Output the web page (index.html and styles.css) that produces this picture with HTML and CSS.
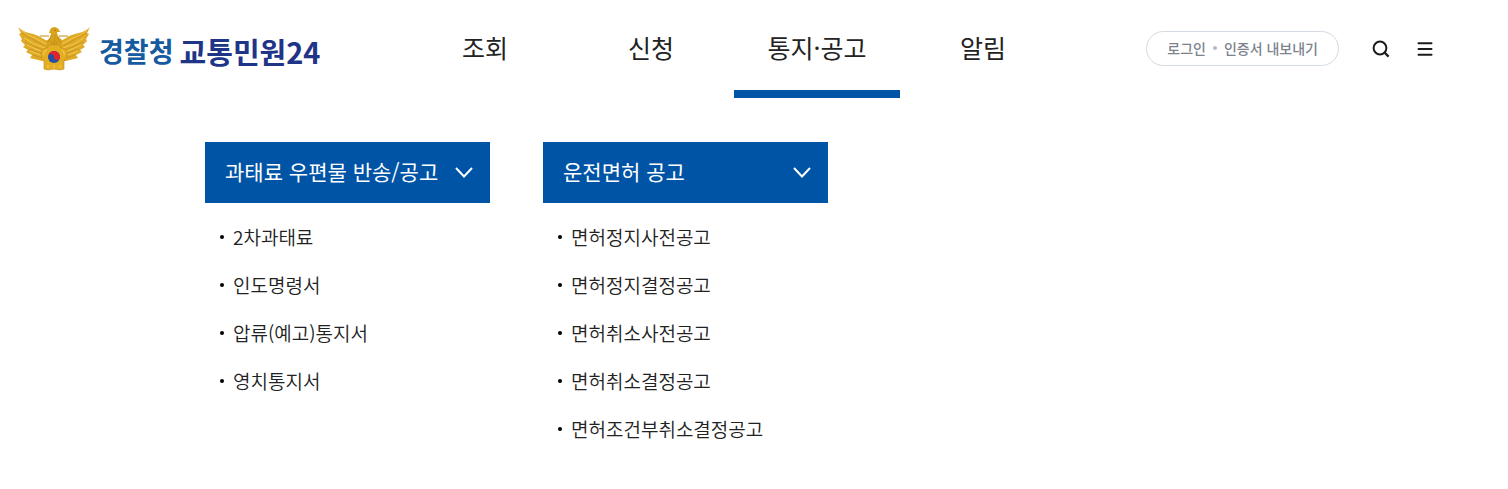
FILE: index.html
```
<!DOCTYPE html>
<html lang="ko">

<head>
    <meta charset="UTF-8">
    <meta name="viewport" content="width=device-width, initial-scale=1.0">
    <title>경찰청 교통민원24</title>
    <link rel="stylesheet" href="styles.css">
</head>

<body>
    <header class="header">
        <a href="#" class="logo">
            <svg class="logo-mark" viewBox="0 0 72 44" aria-hidden="true">
                <!-- wings -->
                <path fill="#dfaa28" d="M0 0 Q4 4 11 6 Q20 8 24 11 L31 15 L31 35 L24 34 L16 32 L12 31 L14 28 L8 25 L10 23 L5 20 L7 18 L3 14 L4 12 L1 7 L3 6 Z" />
                <path fill="#dfaa28" d="M72 0 Q68 4 61 6 Q52 8 48 11 L41 15 L41 35 L48 34 L56 32 L60 31 L58 28 L64 25 L62 23 L67 20 L65 18 L69 14 L68 12 L71 7 L69 6 Z" />
                <path fill="none" stroke="#f3cb4c" stroke-width="1" d="M3 3 Q9 9 17 11 L28 17 M6 11 L16 17 L27 21 M9 18 L18 22 L26 25 M12 24 L23 28 M69 3 Q63 9 55 11 L44 17 M66 11 L56 17 L45 21 M63 18 L54 22 L46 25 M60 24 L49 28" />
                <path fill="none" stroke="#bd8a1b" stroke-width="0.6" d="M4 6 L16 13 L27 19 M7 15 L17 20 L26 23 M11 22 L24 27 M15 28 L24 31 M68 6 L56 13 L45 19 M65 15 L55 20 L46 23 M61 22 L48 27 M57 28 L48 31" />
                <path fill="none" stroke="#c28b18" stroke-width="1" d="M22 9 H31 M41 9 H50" />
                <!-- head and body -->
                <path fill="#d9a31d" d="M31 6 L32 3 Q33 0 37 0 Q41 1 42 5 L39 5 Q39 9 44 13 L44 24 L28 24 L28 14 Q33 11 33 6 Z" />
                <path fill="none" stroke="#b17f16" stroke-width="0.6" d="M34 8 L30 15 M37 8 L36 18 M39 10 L42 16 M33 14 L35 18 M38 14 L39 19" />
                <circle cx="37" cy="3" r="0.6" fill="#714a08" />
                <!-- flower -->
                <path fill="#e4ae23" stroke="#c18a17" stroke-width="0.6" d="M36 18 Q40 16 43 21 Q50 21 49 28 Q49 31 46 34 L46 42 L42 43 L36 42 L30 43 L26 42 L26 34 Q23 31 23 28 Q22 21 29 21 Q32 16 36 18 Z" />
                <path fill="none" stroke="#f8d565" stroke-width="0.8" d="M29 23 Q25 24 26 28 M43 23 Q47 24 46 28 M30 38 V41 M42 38 V41 M36 38 V41" />
                <circle cx="36" cy="30" r="6" fill="#2350a4" />
                <path fill="#e3222c" d="M30 30 A6 6 0 0 1 42 30 A3 3 0 0 1 36 30 A3 3 0 0 0 30 30 Z" />
            </svg>
            <span class="logo-text"><span class="logo-org">경찰청</span><span class="logo-name">교통민원24</span></span>
        </a>

        <nav class="gnb">
            <a href="#">조회</a>
            <a href="#">신청</a>
            <a href="#" class="active">통지·공고</a>
            <a href="#">알림</a>
        </nav>

        <div class="util">
            <div class="util-links">
                <a href="#">로그인</a>
                <span class="dot"></span>
                <a href="#">인증서 내보내기</a>
            </div>
            <button type="button" class="icon-button" aria-label="검색">
                <svg viewBox="0 0 18 18" fill="none" stroke="#1c1c1c" stroke-width="2">
                    <circle cx="8" cy="8" r="6.4" />
                    <path d="M12.3 12.3 L16.6 16.6" stroke-width="2.3" />
                </svg>
            </button>
            <button type="button" class="icon-button" aria-label="전체메뉴">
                <svg viewBox="0 0 18 18" fill="none" stroke="#1c1c1c" stroke-width="2" stroke-linecap="round">
                    <path d="M2.5 3.3 H15.5 M2.5 9 H15.5 M2.5 14.7 H15.5" />
                </svg>
            </button>
        </div>
    </header>

    <main class="submenu">
        <section class="menu-group">
            <button type="button" class="menu-title" aria-expanded="true">
                과태료 우편물 반송/공고
                <svg viewBox="0 0 18 12" fill="none" stroke="#fff" stroke-width="2">
                    <path d="M1 1 L9 9.5 L17 1" />
                </svg>
            </button>
            <ul>
                <li><a href="#">2차과태료</a></li>
                <li><a href="#">인도명령서</a></li>
                <li><a href="#">압류(예고)통지서</a></li>
                <li><a href="#">영치통지서</a></li>
            </ul>
        </section>

        <section class="menu-group">
            <button type="button" class="menu-title" aria-expanded="true">
                운전면허 공고
                <svg viewBox="0 0 18 12" fill="none" stroke="#fff" stroke-width="2">
                    <path d="M1 1 L9 9.5 L17 1" />
                </svg>
            </button>
            <ul>
                <li><a href="#">면허정지사전공고</a></li>
                <li><a href="#">면허정지결정공고</a></li>
                <li><a href="#">면허취소사전공고</a></li>
                <li><a href="#">면허취소결정공고</a></li>
                <li><a href="#">면허조건부취소결정공고</a></li>
            </ul>
        </section>
    </main>
</body>

</html>
```
FILE: styles.css
```
* {
    box-sizing: border-box;
}

body {
    margin: 0;
    background-color: #fff;
    color: #222;
    font-family: "Noto Sans CJK KR", "Noto Sans", sans-serif;
}

a {
    color: inherit;
    text-decoration: none;
}

button {
    border: none;
    font-family: inherit;
    cursor: pointer;
}

.header {
    display: flex;
    height: 98px;
    padding: 0 74px 0 18px;
}

.logo {
    display: flex;
    align-items: center;
    flex: 0 0 384px;
    gap: 9px;
}

.logo-mark {
    width: 72px;
    height: 44px;
}

.logo-text {
    display: flex;
    align-items: center;
    gap: 6px;
    padding-top: 4px;
    font-weight: 700;
    line-height: 40px;
}

.logo-org {
    color: #165a9f;
    font-size: 27px;
}

.logo-name {
    color: #203488;
    font-size: 29px;
}

.gnb {
    display: flex;
    flex: 0 1 664px;
}

.gnb a {
    flex: 1;
    border-bottom: 8px solid transparent;
    font-size: 25px;
    line-height: 94px;
    text-align: center;
    white-space: nowrap;
}

.gnb a.active {
    border-bottom-color: #0054a6;
}

.util {
    display: flex;
    align-items: center;
    gap: 26px;
    margin-left: auto;
}

.util-links {
    display: flex;
    align-items: center;
    gap: 7px;
    height: 35px;
    margin: 0 7px 2px 0;
    padding: 0 20px;
    border: 1px solid #d5dbe3;
    border-radius: 18px;
    color: #7d838d;
    font-size: 14px;
    font-weight: 500;
    white-space: nowrap;
}

.dot {
    width: 4px;
    height: 4px;
    border-radius: 50%;
    background-color: #b4bac6;
}

.icon-button {
    width: 18px;
    height: 18px;
    padding: 0;
    background: none;
}

.icon-button svg {
    display: block;
}

.submenu {
    display: flex;
    gap: 53px;
    padding: 44px 205px;
}

.menu-group {
    flex: 0 1 285px;
}

.menu-title {
    display: flex;
    justify-content: space-between;
    align-items: center;
    width: 100%;
    height: 61px;
    padding: 0 17px 3px 20px;
    background-color: #0054a6;
    color: #fff;
    font-size: 21px;
    white-space: nowrap;
}

.menu-title svg {
    width: 18px;
    height: 12px;
    margin-top: 4px;
}

.menu-group ul {
    margin: 0;
    padding: 10px 0 0 15px;
    list-style: none;
}

.menu-group li {
    display: flex;
    align-items: center;
    gap: 9px;
    font-size: 19px;
    font-weight: 350;
    line-height: 48px;
    white-space: nowrap;
}

.menu-group li::before {
    content: "";
    width: 4px;
    height: 4px;
    border-radius: 50%;
    background-color: #000;
}
```
